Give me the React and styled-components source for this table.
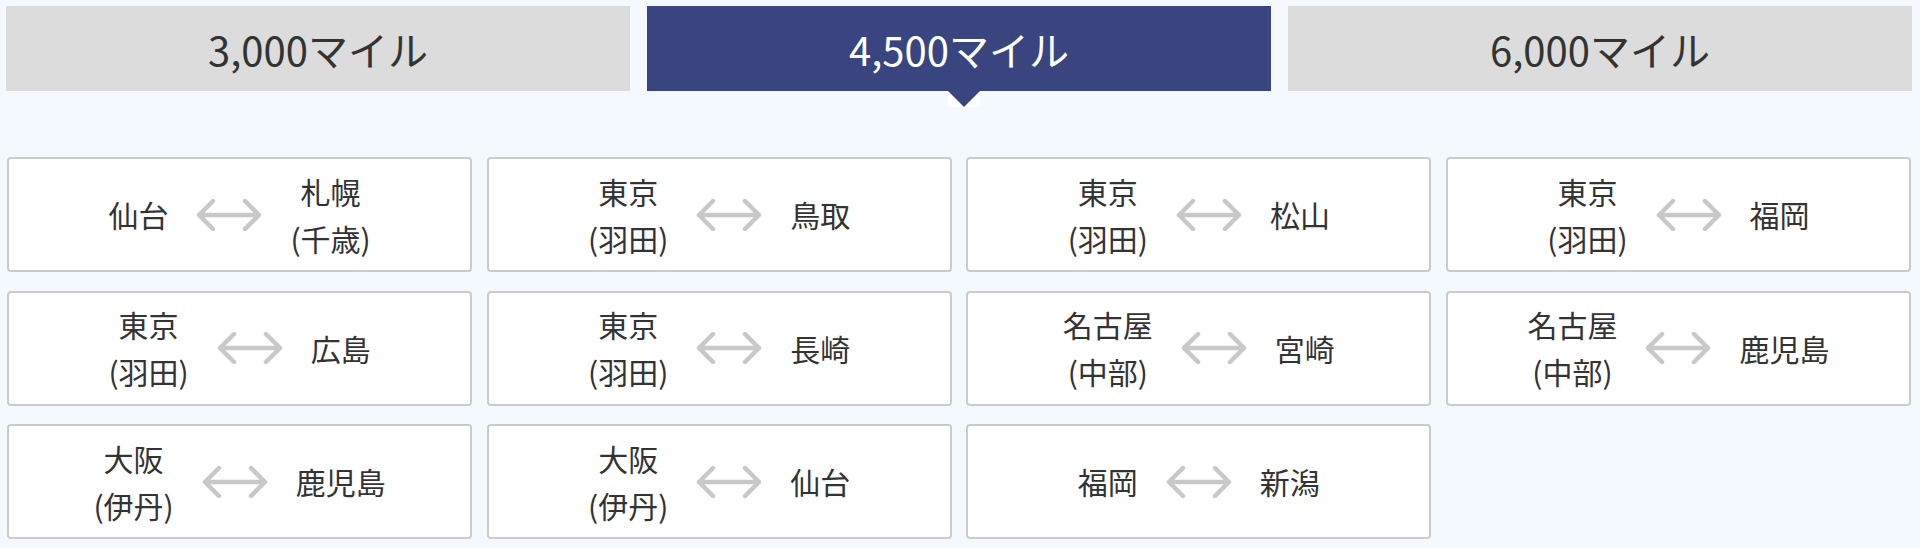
import styled, { createGlobalStyle } from "styled-components";

const GlobalStyle = createGlobalStyle`
  body {
    margin: 0;
    background: #f3f9fe;
    font-family: "Noto Sans CJK JP", "Noto Sans", sans-serif;
    color: #333;
  }
`;

const tabs = ["3,000マイル", "4,500マイル", "6,000マイル"];

// each route: [from lines, to lines]
const routes = [
  [["仙台"], ["札幌", "(千歳)"]],
  [["東京", "(羽田)"], ["鳥取"]],
  [["東京", "(羽田)"], ["松山"]],
  [["東京", "(羽田)"], ["福岡"]],
  [["東京", "(羽田)"], ["広島"]],
  [["東京", "(羽田)"], ["長崎"]],
  [["名古屋", "(中部)"], ["宮崎"]],
  [["名古屋", "(中部)"], ["鹿児島"]],
  [["大阪", "(伊丹)"], ["鹿児島"]],
  [["大阪", "(伊丹)"], ["仙台"]],
  [["福岡"], ["新潟"]],
];

const Arrow = () => (
  <svg width="66" height="32" viewBox="0 0 66 32" fill="none">
    <path
      d="M17 2 L3 16 L17 30 M49 2 L63 16 L49 30 M3 16 H63"
      stroke="#c8c8c8"
      strokeWidth="4.5"
      strokeLinecap="round"
      strokeLinejoin="round"
    />
  </svg>
);

const App = () => {
  const active = 1;
  return (
    <Page>
      <GlobalStyle />
      <TabBar>
        {tabs.map((t, i) => (
          <Tab key={t} $active={i === active}>
            {t}
          </Tab>
        ))}
      </TabBar>
      <RouteGrid>
        {routes.map(([from, to], i) => (
          <Card key={i}>
            <Station>
              {from.map((l) => (
                <div key={l}>{l}</div>
              ))}
            </Station>
            <Arrow />
            <Station>
              {to.map((l) => (
                <div key={l}>{l}</div>
              ))}
            </Station>
          </Card>
        ))}
      </RouteGrid>
    </Page>
  );
};

const Page = styled.div`
  padding: 6px 0 10px;
`;

const TabBar = styled.div`
  display: grid;
  grid-template-columns: repeat(3, 1fr);
  column-gap: 17px;
  padding: 0 8px 0 6px;
`;

const Tab = styled.div`
  position: relative;
  height: 85px;
  display: flex;
  align-items: center;
  justify-content: center;
  font-size: 40px;
  background: ${(p) => (p.$active ? "#39457f" : "#dcdcdc")};
  color: ${(p) => (p.$active ? "#fff" : "#333")};

  ${(p) =>
    p.$active &&
    `
    &::after {
      content: "";
      position: absolute;
      top: 100%;
      left: 50%;
      margin-left: -11px;
      border-top: 16px solid #39457f;
      border-left: 16px solid #fff;
      border-right: 16px solid #fff;
    }
  `}
`;

const RouteGrid = styled.div`
  display: grid;
  grid-template-columns: repeat(4, 1fr);
  column-gap: 14.5px;
  row-gap: 18.5px;
  margin-top: 66px;
  padding: 0 9px 0 7px;
`;

const Card = styled.div`
  box-sizing: border-box;
  height: 115px;
  display: flex;
  align-items: center;
  justify-content: center;
  gap: 28px;
  background: #fff;
  border: 2px solid #cbcbcb;
  border-radius: 4px;
`;

const Station = styled.div`
  text-align: center;
  font-size: 30px;
  line-height: 47px;
  color: #333;
`;

export default App;
